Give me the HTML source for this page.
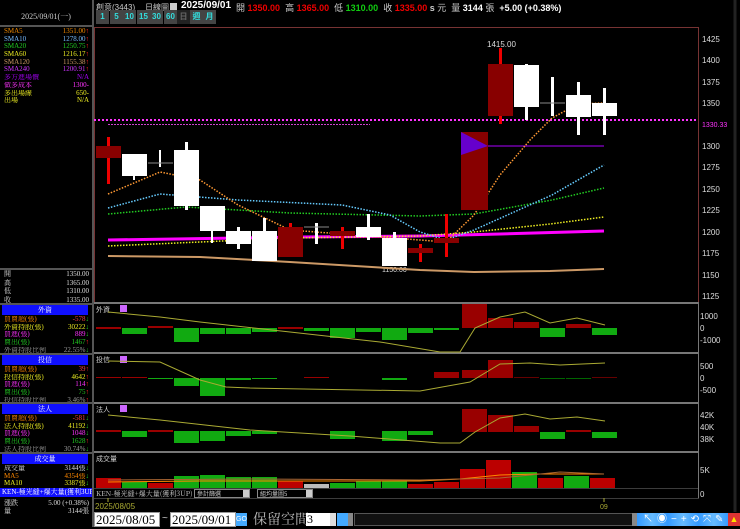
<!DOCTYPE html>
<html><head><meta charset="utf-8"><style>
*{margin:0;padding:0;box-sizing:border-box}
body{width:740px;height:527px;background:#000;overflow:hidden;position:relative;font-family:"Liberation Sans","Noto Sans CJK TC",sans-serif;font-size:9px;color:#ddd}
.a{position:absolute;white-space:nowrap}
.lp{position:absolute;left:0;width:92px;font-family:"Liberation Serif","Noto Serif CJK SC",serif;font-size:7px}
.row{position:relative;height:7.7px;line-height:7.7px;padding:0 4px;overflow:hidden}
.row .v{position:absolute;right:3px;top:0}
.hd{background:#1010ff;color:#fff;text-align:center;height:10px;line-height:10px;margin:0 4px 1px 2px}
.up{color:#f22}.dn{color:#2c2}
.btn{position:absolute;top:10px;height:14px;width:13px;background:#444;color:#3dd;font-size:8px;text-align:center;line-height:14px;font-weight:bold}
</style></head><body>
<div class="a" style="left:92px;top:0;width:2px;height:527px;background:#555"></div>
<div class="a" style="left:0;top:25px;width:92px;height:2px;background:#555"></div>
<div class="a" style="left:0;top:11px;width:92px;text-align:center;font-family:'Liberation Serif','Noto Serif CJK SC',serif;font-size:8px;color:#ccc">2025/09/01(一)</div>
<div class="lp" style="top:28px">
<div class="row" style="color:#e80">SMA5<span class="v">1351.00<span class="up">↑</span></span></div>
<div class="row" style="color:#7bf">SMA10<span class="v">1278.00<span class="up">↑</span></span></div>
<div class="row" style="color:#2c2">SMA20<span class="v">1250.75<span class="up">↑</span></span></div>
<div class="row" style="color:#ee2">SMA60<span class="v">1216.17<span class="up">↑</span></span></div>
<div class="row" style="color:#c96">SMA120<span class="v">1155.38<span class="up">↑</span></span></div>
<div class="row" style="color:#c3f">SMA240<span class="v">1200.91<span class="up">↑</span></span></div>
<div class="row" style="color:#a0f">多方進場價<span class="v">N/A</span></div>
<div class="row" style="color:#f3f">做多成本<span class="v">1300-</span></div>
<div class="row" style="color:#ee2">多出場線<span class="v">650-</span></div>
<div class="row" style="color:#ee2">出場<span class="v">N/A</span></div>
</div>
<div class="a" style="left:0;top:268px;width:92px;height:2px;background:#555"></div>
<div class="lp" style="top:270px;color:#ddd">
<div class="row" style="height:8.5px;line-height:8.5px">開<span class="v">1350.00</span></div>
<div class="row" style="height:8.5px;line-height:8.5px">高<span class="v">1365.00</span></div>
<div class="row" style="height:8.5px;line-height:8.5px">低<span class="v">1310.00</span></div>
<div class="row" style="height:8.5px;line-height:8.5px">收<span class="v">1335.00</span></div>
</div>
<div class="a" style="left:0;top:303px;width:92px;height:2px;background:#555"></div>
<div class="lp" style="top:305px">
<div class="hd">外資</div>
<div class="row" style="color:#f80">買賣超(張)<span class="v" style="color:#f44">-578<span class="dn">↓</span></span></div>
<div class="row" style="color:#ee2">外資持股(張)<span class="v">30222<span class="dn">↓</span></span></div>
<div class="row" style="color:#f3f">買進(張)<span class="v">889<span class="dn">↓</span></span></div>
<div class="row" style="color:#2c2">賣出(張)<span class="v">1467<span class="up">↑</span></span></div>
<div class="row" style="color:#999">外資持股比例<span class="v">22.55%<span class="dn">↓</span></span></div>
</div>
<div class="a" style="left:0;top:353px;width:92px;height:2px;background:#555"></div>
<div class="lp" style="top:355px">
<div class="hd">投信</div>
<div class="row" style="color:#f80">買賣超(張)<span class="v" style="color:#f44">39<span class="up">↑</span></span></div>
<div class="row" style="color:#ee2">投信持股(張)<span class="v">4642<span class="up">↑</span></span></div>
<div class="row" style="color:#f3f">買進(張)<span class="v">114<span class="up">↑</span></span></div>
<div class="row" style="color:#2c2">賣出(張)<span class="v">75<span class="up">↑</span></span></div>
<div class="row" style="color:#999">投信持股比例<span class="v">3.46%<span class="up">↑</span></span></div>
</div>
<div class="a" style="left:0;top:402px;width:92px;height:2px;background:#555"></div>
<div class="lp" style="top:404px">
<div class="hd">法人</div>
<div class="row" style="color:#f80">買賣超(張)<span class="v" style="color:#f44">-581<span class="dn">↓</span></span></div>
<div class="row" style="color:#ee2">法人持股(張)<span class="v">41192<span class="dn">↓</span></span></div>
<div class="row" style="color:#f3f">買進(張)<span class="v">1048<span class="dn">↓</span></span></div>
<div class="row" style="color:#2c2">賣出(張)<span class="v">1628<span class="up">↑</span></span></div>
<div class="row" style="color:#999">法人持股比例<span class="v">30.74%<span class="dn">↓</span></span></div>
</div>
<div class="a" style="left:0;top:452px;width:92px;height:2px;background:#555"></div>
<div class="lp" style="top:454px">
<div class="hd">成交量</div>
<div class="row" style="color:#ddd">成交量<span class="v">3144張<span class="dn">↓</span></span></div>
<div class="row" style="color:#f80">MA5<span class="v">4354張<span class="dn">↓</span></span></div>
<div class="row" style="color:#ee2">MA10<span class="v">3387張<span class="dn">↓</span></span></div>
</div>
<div class="a" style="left:0;top:488px;width:92px;height:9px;background:#1010ff;color:#fff;font-size:7px;line-height:9px;padding-left:2px;overflow:hidden;font-family:'Liberation Serif','Noto Serif CJK SC',serif">KEN-極光縫+爆大量(獲利3UP)</div>
<div class="lp" style="top:499px;color:#ddd">
<div class="row" style="height:8px;line-height:8px">漲跌<span class="v">5.00 (+0.38%)</span></div>
<div class="row" style="height:8px;line-height:8px">量<span class="v">3144張</span></div>
</div>

<div class="a" style="left:96px;top:2px;font-size:8px;color:#ccc">創意(3443)</div>
<div class="a" style="left:145px;top:2px;font-size:8px;color:#ccc">日線圖</div>
<div class="a" style="left:170px;top:2px;width:7px;height:7px;background:#ccc;margin-top:1px"></div>
<div class="a" style="left:181px;top:0px;font-size:10px;font-weight:bold;color:#fff">2025/09/01</div>
<div class="a" style="left:236px;top:1px;font-size:9px;color:#ccc">開 <b style="color:#e00">1350.00</b> &nbsp;高 <b style="color:#e00">1365.00</b> &nbsp;低 <b style="color:#1c1">1310.00</b> &nbsp;收 <b style="color:#e00">1335.00</b> <b>s</b> 元 &nbsp;量 <b style="color:#fff">3144</b> 張 &nbsp;<b style="color:#fff">+5.00 (+0.38%)</b></div>
<div class="btn" style="left:96px">1</div><div class="btn" style="left:110px">5</div><div class="btn" style="left:123px">10</div><div class="btn" style="left:137px">15</div><div class="btn" style="left:150px">30</div><div class="btn" style="left:164px">60</div><div class="btn" style="left:177px;background:#222;color:#666">日</div><div class="btn" style="left:190px">週</div><div class="btn" style="left:203px">月</div>

<svg class="a" style="left:0;top:0" width="740" height="527">
<rect x="94.5" y="27.5" width="604" height="275" fill="none" stroke="#733" />
<line x1="94" y1="303" x2="699" y2="303" stroke="#777" stroke-width="2"/>
<line x1="94" y1="353" x2="699" y2="353" stroke="#777" stroke-width="2"/>
<line x1="94" y1="403" x2="699" y2="403" stroke="#777" stroke-width="2"/>
<line x1="94" y1="452" x2="699" y2="452" stroke="#777" stroke-width="2"/>
<line x1="94" y1="489" x2="699" y2="489" stroke="#777" stroke-width="1"/>
<line x1="94" y1="498" x2="699" y2="498" stroke="#777" stroke-width="1"/>
<line x1="698.5" y1="303" x2="698.5" y2="498" stroke="#777"/>
<line x1="735" y1="0" x2="735" y2="512" stroke="#222" stroke-width="3"/>
<g fill="#ddd" font-size="8" font-family="Liberation Sans">
<text x="702" y="42">1425</text><text x="702" y="63">1400</text><text x="702" y="85">1375</text><text x="702" y="106">1350</text><text x="702" y="149">1300</text><text x="702" y="170">1275</text><text x="702" y="192">1250</text><text x="702" y="213">1225</text><text x="702" y="235">1200</text><text x="702" y="256">1175</text><text x="702" y="278">1150</text><text x="702" y="299">1125</text>
<text x="702" y="127" fill="#f3f" font-size="7">1330.33</text>
<text x="700" y="319">1000</text><text x="700" y="331">0</text><text x="700" y="343">-1000</text>
<text x="700" y="369">500</text><text x="700" y="381">0</text><text x="700" y="393">-500</text>
<text x="700" y="418">42K</text><text x="700" y="430">40K</text><text x="700" y="442">38K</text>
<text x="700" y="473">5K</text><text x="700" y="497">0</text>
<text x="487" y="47">1415.00</text>
<text x="382" y="272" font-size="7">1150.00</text>
</g>
<line x1="94" y1="120" x2="698" y2="120" stroke="#f3f" stroke-width="2" stroke-dasharray="2,2"/>
<line x1="108" y1="124.5" x2="370" y2="124.5" stroke="#c4c" stroke-width="1" stroke-dasharray="2,1"/>
<line x1="474" y1="146" x2="604" y2="146" stroke="#a0f" stroke-width="1"/>
<polyline fill="none" stroke="#c96" stroke-width="2" points="108,256 200,257 290,262 420,270 474,272 550,271 604,269"/>
<polyline fill="none" stroke="#f0f" stroke-width="3" points="108,240 300,237 420,236 500,234 604,231"/>
<polyline fill="none" stroke="#ee2" stroke-width="1.5" stroke-dasharray="1.5,1.5" points="108,246 200,242 290,238 420,236 474,232 550,224 604,217"/>
<polyline fill="none" stroke="#2c2" stroke-width="1.5" stroke-dasharray="1.5,1.5" points="108,214 186,207 290,213 420,216 474,214 552,200 604,188"/>
<polyline fill="none" stroke="#6cf" stroke-width="1.5" stroke-dasharray="1.5,1.5" points="108,208 160,194 238,200 342,205 390,215 420,232 446,240 474,230 552,195 604,165"/>
<polyline fill="none" stroke="#f93" stroke-width="1.5" stroke-dasharray="1.5,1.5" points="108,194 160,172 200,180 238,205 290,230 420,240 446,242 474,215 500,175 530,140 552,118 578,104 604,103"/>
<g>
<rect x="107" y="137" width="3" height="47" fill="#e00"/><rect x="96" y="146" width="25" height="12" fill="#800"/>
<rect x="133" y="154" width="2" height="26" fill="#fff"/><rect x="122" y="154" width="25" height="22" fill="#fff"/>
<rect x="159" y="150" width="2" height="17" fill="#fff"/><line x1="148" y1="163" x2="173" y2="163" stroke="#888"/>
<rect x="185" y="142" width="3" height="68" fill="#fff"/><rect x="174" y="150" width="25" height="56" fill="#fff"/>
<rect x="211" y="206" width="2" height="37" fill="#fff"/><rect x="200" y="206" width="25" height="25" fill="#fff"/>
<rect x="237" y="227" width="3" height="22" fill="#fff"/><rect x="226" y="231" width="25" height="13" fill="#fff"/>
<rect x="263" y="218" width="3" height="43" fill="#fff"/><rect x="252" y="231" width="25" height="30" fill="#fff"/>
<rect x="289" y="223" width="3" height="34" fill="#e00"/><rect x="278" y="227" width="25" height="30" fill="#800"/>
<rect x="315" y="223" width="3" height="21" fill="#fff"/><line x1="304" y1="227" x2="329" y2="227" stroke="#888"/>
<rect x="341" y="227" width="3" height="22" fill="#e00"/><rect x="330" y="231" width="25" height="5" fill="#800"/>
<rect x="367" y="214" width="3" height="26" fill="#fff"/><rect x="356" y="227" width="25" height="10" fill="#fff"/>
<rect x="393" y="232" width="3" height="34" fill="#fff"/><rect x="382" y="238" width="25" height="28" fill="#fff"/>
<rect x="419" y="244" width="3" height="18" fill="#e00"/><rect x="408" y="248" width="25" height="5" fill="#800"/>
<rect x="445" y="214" width="3" height="43" fill="#e00"/><rect x="434" y="238" width="25" height="5" fill="#800"/>
<rect x="461" y="132" width="27" height="78" fill="#800"/><polygon points="461,132 461,155 488,146" fill="#60c"/>
<rect x="499" y="48" width="3" height="76" fill="#e00"/><rect x="488" y="64" width="25" height="52" fill="#800"/>
<rect x="525" y="64" width="3" height="56" fill="#fff"/><rect x="514" y="65" width="25" height="42" fill="#fff"/>
<rect x="551" y="77" width="3" height="39" fill="#fff"/><line x1="540" y1="103" x2="565" y2="103" stroke="#888"/>
<rect x="577" y="82" width="3" height="53" fill="#fff"/><rect x="566" y="95" width="25" height="22" fill="#fff"/>
<rect x="603" y="88" width="3" height="47" fill="#fff"/><rect x="592" y="103" width="25" height="13" fill="#fff"/>
</g>
<g fill="#ccc" font-size="7" font-family="Noto Sans CJK TC"><text x="96" y="312">外資</text><text x="96" y="362">投信</text><text x="96" y="412">法人</text><text x="96" y="461">成交量</text></g>
<rect x="120" y="305" width="7" height="7" fill="#c6f"/><rect x="120" y="356" width="7" height="7" fill="#c6f"/><rect x="120" y="405" width="7" height="7" fill="#c6f"/>
<g>
<rect x="96" y="327" width="25" height="2" fill="#900"/><rect x="122" y="328" width="25" height="6" fill="#1a1"/><rect x="148" y="326" width="25" height="2" fill="#900"/><rect x="174" y="328" width="25" height="14" fill="#1a1"/><rect x="200" y="328" width="25" height="6" fill="#1a1"/><rect x="226" y="328" width="25" height="6" fill="#1a1"/><rect x="252" y="328" width="25" height="4" fill="#1a1"/><rect x="278" y="327" width="25" height="2" fill="#900"/><rect x="304" y="328" width="25" height="3" fill="#1a1"/><rect x="330" y="328" width="25" height="10" fill="#1a1"/><rect x="356" y="328" width="25" height="4" fill="#1a1"/><rect x="382" y="328" width="25" height="12" fill="#1a1"/><rect x="408" y="328" width="25" height="5" fill="#1a1"/><rect x="434" y="328" width="25" height="2" fill="#1a1"/>
<rect x="462" y="304" width="25" height="24" fill="#900"/><rect x="488" y="318" width="25" height="10" fill="#900"/><rect x="514" y="322" width="25" height="6" fill="#900"/><rect x="540" y="328" width="25" height="9" fill="#1a1"/><rect x="566" y="324" width="25" height="4" fill="#900"/><rect x="592" y="328" width="25" height="7" fill="#1a1"/>
<polyline fill="none" stroke="#aa3" points="108,312 160,317 200,322 290,332 380,342 440,352 460,352 475,328 500,317 525,312 550,323 577,318 605,325"/>
</g>
<g>
<rect x="96" y="377" width="25" height="1" fill="#900"/><rect x="122" y="377" width="25" height="1" fill="#900"/><rect x="148" y="378" width="25" height="1" fill="#1a1"/><rect x="174" y="378" width="25" height="8" fill="#1a1"/><rect x="200" y="378" width="25" height="18" fill="#1a1"/><rect x="226" y="378" width="25" height="2" fill="#1a1"/><rect x="252" y="378" width="25" height="1" fill="#1a1"/><rect x="304" y="377" width="25" height="1" fill="#900"/><rect x="382" y="378" width="25" height="2" fill="#1a1"/>
<rect x="434" y="372" width="25" height="6" fill="#900"/><rect x="462" y="370" width="25" height="8" fill="#900"/><rect x="488" y="360" width="25" height="18" fill="#900"/><rect x="514" y="377" width="25" height="1" fill="#600"/><rect x="540" y="378" width="25" height="1" fill="#060"/><rect x="566" y="378" width="25" height="1" fill="#060"/><rect x="592" y="377" width="25" height="1" fill="#600"/>
<polyline fill="none" stroke="#aa3" points="108,361 160,362 200,380 226,387 250,388 420,391 470,382 500,364 530,363 560,365 605,363"/>
</g>
<g>
<rect x="96" y="430" width="25" height="2" fill="#900"/><rect x="122" y="431" width="25" height="6" fill="#1a1"/><rect x="148" y="430" width="25" height="2" fill="#900"/><rect x="174" y="431" width="25" height="12" fill="#1a1"/><rect x="200" y="431" width="25" height="10" fill="#1a1"/><rect x="226" y="431" width="25" height="5" fill="#1a1"/><rect x="252" y="431" width="25" height="3" fill="#1a1"/><rect x="330" y="431" width="25" height="8" fill="#1a1"/><rect x="382" y="431" width="25" height="10" fill="#1a1"/><rect x="408" y="431" width="25" height="4" fill="#1a1"/>
<rect x="462" y="409" width="25" height="23" fill="#900"/><rect x="488" y="415" width="25" height="17" fill="#900"/><rect x="514" y="426" width="25" height="6" fill="#900"/><rect x="540" y="432" width="25" height="7" fill="#1a1"/><rect x="566" y="430" width="25" height="2" fill="#900"/><rect x="592" y="432" width="25" height="6" fill="#1a1"/>
<polyline fill="none" stroke="#aa3" points="108,415 160,420 250,430 350,436 440,443 460,443 475,432 500,418 525,414 550,419 577,417 605,421"/>
</g>
<g>
<rect x="96" y="478" width="25" height="10" fill="#b00"/><rect x="122" y="482" width="25" height="6" fill="#1a1"/><rect x="148" y="483" width="25" height="5" fill="#b00"/><rect x="174" y="476" width="25" height="12" fill="#1a1"/><rect x="200" y="475" width="25" height="13" fill="#1a1"/><rect x="226" y="477" width="25" height="11" fill="#1a1"/><rect x="252" y="477" width="25" height="11" fill="#1a1"/><rect x="278" y="481" width="25" height="7" fill="#b00"/><rect x="304" y="484" width="25" height="4" fill="#bbb"/><rect x="330" y="483" width="25" height="5" fill="#1a1"/><rect x="356" y="481" width="25" height="7" fill="#1a1"/><rect x="382" y="481" width="25" height="7" fill="#1a1"/><rect x="408" y="484" width="25" height="4" fill="#b00"/><rect x="434" y="482" width="25" height="6" fill="#b00"/><rect x="460" y="469" width="25" height="19" fill="#b00"/><rect x="486" y="460" width="25" height="28" fill="#b00"/><rect x="512" y="472" width="25" height="16" fill="#1a1"/><rect x="538" y="478" width="25" height="10" fill="#b00"/><rect x="564" y="476" width="25" height="12" fill="#1a1"/><rect x="590" y="478" width="25" height="10" fill="#b00"/>
<polyline fill="none" stroke="#f80" points="108,482 200,481 300,481 420,481 460,479 500,475 540,474 604,474"/>
<polyline fill="none" stroke="#a63" points="108,480 250,479 420,480 500,478 560,472 604,474"/>
</g>
<rect x="94" y="489" width="604" height="9" fill="#000"/>
<text x="96" y="496" fill="#ccc" font-size="7" font-family="Noto Serif CJK SC">KEN-極光縫+爆大量(獲利3UP)</text>
<rect x="194.5" y="489.5" width="55" height="8" fill="#000" stroke="#888"/><text x="197" y="496" fill="#ccc" font-size="6" font-family="Noto Sans CJK TC">參計篩選</text><rect x="243" y="490" width="6" height="7" fill="#ccc"/>
<rect x="257.5" y="489.5" width="55" height="8" fill="#000" stroke="#888"/><text x="260" y="496" fill="#ccc" font-size="6" font-family="Noto Sans CJK TC">組均量圖5</text><rect x="306" y="490" width="6" height="7" fill="#ccc"/>
<line x1="108" y1="498" x2="108" y2="502" stroke="#aa3"/><line x1="604" y1="498" x2="604" y2="502" stroke="#aa3"/>
<text x="95" y="509" fill="#aa3" font-size="8">2025/08/05</text>
<text x="600" y="509" fill="#aa3" font-size="7">09</text>
</svg>
<div class="a" style="left:94px;top:512px;width:66px;height:15px;background:#fff;border:1px solid #999;color:#000;font:13px 'Liberation Serif',serif;line-height:14px;padding-left:1px">2025/08/05</div>
<div class="a" style="left:162px;top:513px;color:#ccc;font-size:10px">~</div>
<div class="a" style="left:170px;top:512px;width:66px;height:15px;background:#fff;border:1px solid #999;color:#000;font:13px 'Liberation Serif',serif;line-height:14px;padding-left:1px">2025/09/01</div>
<div class="a" style="left:236px;top:513px;width:11px;height:13px;background:#4af;color:#fff;font-size:7px;text-align:center;line-height:13px">GO</div>
<div class="a" style="left:253px;top:511px;color:#bbb;font:14px 'Noto Serif CJK SC',serif;line-height:16px">保留空間</div>
<div class="a" style="left:306px;top:513px;width:24px;height:13px;background:#fff;color:#000;font:12px 'Liberation Serif',serif;line-height:13px;padding-left:1px">3</div>
<div class="a" style="left:330px;top:513px;width:6px;height:13px;background:#ddd"></div>
<div class="a" style="left:337px;top:513px;width:11px;height:13px;background:#4af"></div>
<div class="a" style="left:348px;top:513px;width:5px;height:13px;background:#888"></div>
<div class="a" style="left:354px;top:513px;width:279px;height:13px;background:#111;border:1px solid #555"></div>
<div class="a" style="left:632px;top:513px;width:5px;height:13px;background:#888"></div>
<div class="a" style="left:637px;top:513px;width:92px;height:13px;background:linear-gradient(90deg,#39f,#6bf,#39f,#6bf,#39f,#6bf,#39f)"></div>
<div class="a" style="left:643px;top:513px;color:#fff;font-size:10px;letter-spacing:4px;line-height:13px">↖◉−+⟲⤧✎</div>
<div class="a" style="left:728px;top:513px;width:12px;height:13px;background:#d33;color:#fd0;font-size:9px;text-align:center;line-height:13px">▲</div>
</body></html>
